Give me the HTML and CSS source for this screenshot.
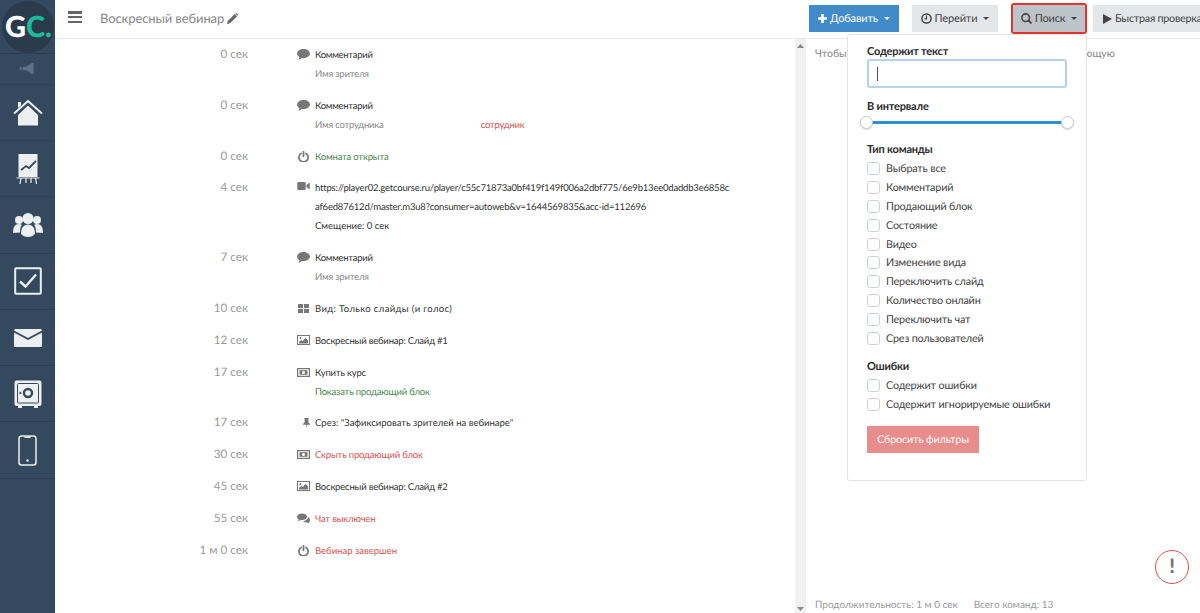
FILE: index.html
```html
<!DOCTYPE html>
<html lang="ru">
<head>
<meta charset="utf-8">
<title>Воскресный вебинар</title>
<link rel="stylesheet" href="styles.css">
</head>
<body>
<svg class="defs" width="0" height="0" aria-hidden="true">
  <symbol id="i-comment" viewBox="0 0 14 12"><path d="M7 0C3.100 0 0 2.200 0 5c0 1.600 1 3 2.600 3.900C2.400 10 1.800 10.900 1.200 11.600c1.500-.1 3-.8 4-1.700.6.100 1.200.1 1.800.1 3.900 0 7-2.200 7-5S10.900 0 7 0z"/></symbol>
  <symbol id="i-power" viewBox="0 0 12 12"><path d="M3.300 2.700a5 5 0 1 0 5.400 0M6 .8v5" fill="none" stroke="currentColor" stroke-width="1.900" stroke-linecap="round"/></symbol>
  <symbol id="i-video" viewBox="0 0 14 9"><rect x="0" y="0" width="9.500" height="9" rx="1.500"/><path d="M10.200 3.500 14 .5v8l-3.800-3z"/></symbol>
  <symbol id="i-grid" viewBox="0 0 11 9"><rect width="5" height="4"/><rect x="6" width="5" height="4"/><rect y="5" width="5" height="4"/><rect x="6" y="5" width="5" height="4"/></symbol>
  <symbol id="i-image" viewBox="0 0 13 10"><rect x=".5" y=".5" width="12" height="9" fill="none" stroke="currentColor"/><path d="M2 8.500V7L4.300 5l1.500 1L8.500 2.800 11 5.500v3z"/><circle cx="3.500" cy="3" r="1"/></symbol>
  <symbol id="i-money" viewBox="0 0 13 9"><path d="M.6.600h11.800v7.800H.6z" fill="none" stroke="currentColor" stroke-width="1.200"/><rect x="2.500" y="2.200" width="8" height="4.600"/><circle cx="6.500" cy="4.500" r="1.500" fill="#fff"/></symbol>
  <symbol id="i-pin" viewBox="0 0 7 10"><path d="M1.200 0h4.600v.8h-.4v3.400L7 6v.8H4L3.500 10 3 6.800H0V6l1.600-1.800V.8h-.4z"/></symbol>
  <symbol id="i-comments" viewBox="0 0 14 11"><path d="M5.500 0C2.500 0 0 1.600 0 3.700c0 1.100.7 2.100 1.900 2.800-.2.700-.6 1.200-1 1.600 1.200-.1 2.200-.5 3-1.100.5.100 1 .2 1.600.2 3 0 5.400-1.600 5.400-3.500S8.500 0 5.500 0z"/><path d="M12 3.800c0 2.500-2.500 4.200-5.500 4.400.8 1 2.300 1.600 3.900 1.600.3 0 .6 0 .9-.1.600.5 1.400.9 2.300 1-.3-.4-.6-.8-.7-1.300C14 9 14 8 14 7c0-1.300-.8-2.400-2-3.200z"/></symbol>
  <symbol id="i-caret" viewBox="0 0 8 4"><path d="M0 0h8L4 4z"/></symbol>
</svg>

<div class="app">
  <nav class="sidebar">
    <div class="logo-cell"><span class="logo"><span>G</span><span class="logo-c">C.</span></span></div>
    <div class="side-sound">
      <svg width="18" height="11" viewBox="0 0 18 12"><rect x="0" y="4" width="2" height="4" rx="1"/><path d="M3 4h4l6-4h2v12h-2L7 8H3z"/></svg>
    </div>
    <div class="side-item">
      <svg width="30" height="27" viewBox="0 0 30 27"><path d="M5 16 15 6.500 25 16v10.500H5z"/><path d="M1 14.500 15 2l14 12.500" fill="none" stroke="currentColor" stroke-width="2"/><path d="M5 9V3h3v3.500z"/></svg>
    </div>
    <div class="side-item">
      <svg width="24" height="32" viewBox="0 0 24 32"><path d="M2.500 1h19v23h-19z"/><path d="M5 17l5-4 3 2 7-7" fill="none" stroke="#34495e" stroke-width="1.800"/><path d="M.500 25h23M5 25l-1 6M10 25v5M15 25v5M19.500 25l1 6" fill="none" stroke="currentColor" stroke-width="1.200"/></svg>
    </div>
    <div class="side-item">
      <svg width="30" height="24" viewBox="0 0 30 24"><circle cx="15" cy="5.500" r="5.500"/><circle cx="6" cy="7" r="4"/><circle cx="24" cy="7" r="4"/><path d="M0 20c0-6 2-9 6-9 1 0 2 .3 2.800.8C7.600 13.500 7 16 7 19.500zM30 20c0-6-2-9-6-9-1 0-2 .3-2.800.8 1.200 1.700 1.800 4.200 1.800 7.700z"/><path d="M8 21c0-6 2.500-9.500 7-9.500s7 3.500 7 9.500c-2 1.800-4.300 3-7 3s-5-1.200-7-3z"/></svg>
    </div>
    <div class="side-item">
      <svg width="28" height="28" viewBox="0 0 28 28"><rect x="1.200" y="1.200" width="25.600" height="25.600" rx="1" fill="none" stroke="currentColor" stroke-width="2"/><path d="M6 14.500l5.500 5L22 7.500" fill="none" stroke="currentColor" stroke-width="2.400"/></svg>
    </div>
    <div class="side-item">
      <svg width="28" height="18" viewBox="0 0 28 18"><path d="M0 1.500 1 0h26l1 1.500L14 9z"/><path d="M0 3.500 14 11 28 3.500V17a1 1 0 0 1-1 1H1a1 1 0 0 1-1-1z"/></svg>
    </div>
    <div class="side-item">
      <svg width="28" height="28" viewBox="0 0 28 28"><rect x=".5" y=".5" width="27" height="25.500" rx="2"/><rect x="3.500" y="3.500" width="21" height="19.500" rx="1" fill="none" stroke="#34495e" stroke-width="1"/><circle cx="14" cy="13" r="4" fill="none" stroke="#34495e" stroke-width="2.400"/><path d="M5.500 11.500 8 13l-2.500 1.500z" fill="#34495e"/><rect x="4" y="26" width="4" height="2"/><rect x="20" y="26" width="4" height="2"/></svg>
    </div>
    <div class="side-item">
      <svg width="19" height="31" viewBox="0 0 19 31"><rect x="1" y="1" width="17" height="29" rx="2.500" fill="none" stroke="currentColor" stroke-width="1.500"/><rect x="6.500" y="1.500" width="6" height="1.500"/><circle cx="9.500" cy="25.500" r="1.200"/></svg>
    </div>
  </nav>

  <div class="content">
    <header class="topbar">
      <div class="top-left">
        <button class="burger" aria-label="Меню"><span></span><span></span><span></span></button>
        <span class="page-title">Воскресный вебинар
          <svg class="pencil" width="11" height="11" viewBox="0 0 12 12"><path d="M0 12l.8-3.300L8.500 1l2.500 2.500-7.700 7.700zM9.300.3a1 1 0 0 1 1.400 0l1 1a1 1 0 0 1 0 1.400l-.2.200L9 .4z"/></svg>
        </span>
      </div>
      <div class="top-actions">
        <button class="btn btn-add">
          <svg width="9" height="9" viewBox="0 0 10 10"><path d="M3.500 0h3v3.500H10v3H6.500V10h-3V6.500H0v-3h3.500z"/></svg>
          Добавить <svg class="caret" width="6" height="3"><use href="#i-caret"/></svg>
        </button>
        <button class="btn btn-go">
          <svg width="11" height="11" viewBox="0 0 11 11"><circle cx="5.500" cy="5.500" r="4.600" fill="none" stroke="currentColor" stroke-width="1.500"/><path d="M5.500 2.500v3.300H3.500" fill="none" stroke="currentColor" stroke-width="1.200"/></svg>
          Перейти <svg class="caret" width="6" height="3"><use href="#i-caret"/></svg>
        </button>
        <button class="btn btn-search">
          <svg width="11" height="11" viewBox="0 0 11 11"><circle cx="4.700" cy="4.700" r="3.800" fill="none" stroke="currentColor" stroke-width="1.600"/><path d="M7.500 7.500 10.500 10.500" stroke="currentColor" stroke-width="1.800"/></svg>
          Поиск <svg class="caret" width="6" height="3"><use href="#i-caret"/></svg>
        </button>
        <button class="btn btn-check">
          <svg width="9" height="10" viewBox="0 0 9 10"><path d="M0 0l9 5-9 5z"/></svg>
          Быстрая проверка
        </button>
      </div>
    </header>

    <div class="workspace">
      <main class="timeline">
        <div class="row"><div class="time">0 сек</div><div class="ico-cell"><svg class="i-c"><use href="#i-comment"/></svg></div><div class="body"><div class="dark label">Комментарий</div><div class="muted">Имя зрителя</div></div></div>
        <div class="row"><div class="time">0 сек</div><div class="ico-cell"><svg class="i-c"><use href="#i-comment"/></svg></div><div class="body"><div class="dark label">Комментарий</div><div class="muted">Имя сотрудника<span class="staff">сотрудник</span></div></div></div>
        <div class="row"><div class="time">0 сек</div><div class="ico-cell"><svg class="i-p"><use href="#i-power"/></svg></div><div class="body"><div class="green">Комната открыта</div></div></div>
        <div class="row"><div class="time">4 сек</div><div class="ico-cell"><svg class="i-v"><use href="#i-video"/></svg></div><div class="body"><div class="dark">https://player02.getcourse.ru/player/c55c71873a0bf419f149f006a2dbf775/6e9b13ee0daddb3e6858c<br>af6ed87612d/master.m3u8?consumer=autoweb&amp;v=1644569835&amp;acc-id=112696</div><div class="dark loose">Смещение: 0 сек</div></div></div>
        <div class="row"><div class="time">7 сек</div><div class="ico-cell"><svg class="i-c"><use href="#i-comment"/></svg></div><div class="body"><div class="dark label">Комментарий</div><div class="muted">Имя зрителя</div></div></div>
        <div class="row"><div class="time">10 сек</div><div class="ico-cell"><svg class="i-g"><use href="#i-grid"/></svg></div><div class="body"><div class="dark wide">Вид: Только слайды (и голос)</div></div></div>
        <div class="row"><div class="time">12 сек</div><div class="ico-cell"><svg class="i-i"><use href="#i-image"/></svg></div><div class="body"><div class="dark">Воскресный вебинар: Слайд #1</div></div></div>
        <div class="row"><div class="time">17 сек</div><div class="ico-cell"><svg class="i-m"><use href="#i-money"/></svg></div><div class="body"><div class="dark">Купить курс</div><div class="green">Показать продающий блок</div></div></div>
        <div class="row"><div class="time">17 сек</div><div class="ico-cell"><svg class="i-pin"><use href="#i-pin"/></svg></div><div class="body"><div class="dark loose">Срез: "Зафиксировать зрителей на вебинаре"</div></div></div>
        <div class="row"><div class="time">30 сек</div><div class="ico-cell"><svg class="i-m"><use href="#i-money"/></svg></div><div class="body"><div class="red">Скрыть продающий блок</div></div></div>
        <div class="row"><div class="time">45 сек</div><div class="ico-cell"><svg class="i-i"><use href="#i-image"/></svg></div><div class="body"><div class="dark">Воскресный вебинар: Слайд #2</div></div></div>
        <div class="row"><div class="time">55 сек</div><div class="ico-cell"><svg class="i-c"><use href="#i-comments"/></svg></div><div class="body"><div class="red">Чат выключен</div></div></div>
        <div class="row"><div class="time">1 м 0 сек</div><div class="ico-cell"><svg class="i-p"><use href="#i-power"/></svg></div><div class="body"><div class="red loose">Вебинар завершен</div></div></div>
      </main>

      <div class="scrollbar">
        <svg width="7" height="4" viewBox="0 0 7 4"><path d="M0 4h7L3.500 0z"/></svg>
        <svg width="7" height="4" viewBox="0 0 7 4"><path d="M0 0h7L3.500 4z"/></svg>
      </div>

      <aside class="side-panel">
        <p class="hint"><span>Чтобы</span><span>ющую</span></p>
        <div class="totals"><span>Продолжительность: 1 м 0 сек</span><span>Всего команд: 13</span></div>
      </aside>
    </div>
  </div>

  <form class="search-menu">
    <label class="field-label">Содержит текст</label>
    <div class="text-input"><span class="cursor"></span></div>
    <div class="field-label range-label">В интервале</div>
    <div class="range"><span class="knob"></span><span class="track"></span><span class="knob"></span></div>
    <div class="field-label type-label">Тип команды</div>
    <ul class="checks">
      <li><span class="box"></span>Выбрать все</li>
      <li><span class="box"></span>Комментарий</li>
      <li><span class="box"></span>Продающий блок</li>
      <li><span class="box"></span>Состояние</li>
      <li><span class="box"></span>Видео</li>
      <li><span class="box"></span>Изменение вида</li>
      <li><span class="box"></span>Переключить слайд</li>
      <li><span class="box"></span>Количество онлайн</li>
      <li><span class="box"></span>Переключить чат</li>
      <li><span class="box"></span>Срез пользователей</li>
    </ul>
    <div class="field-label err-label">Ошибки</div>
    <ul class="checks">
      <li><span class="box"></span>Содержит ошибки</li>
      <li><span class="box"></span>Содержит игнорируемые ошибки</li>
    </ul>
    <button type="button" class="reset">Сбросить фильтры</button>
  </form>

  <div class="alert-badge">!</div>
</div>
</body>
</html>
```
FILE: styles.css
```css
* { box-sizing: border-box; }
html, body { margin: 0; height: 100%; overflow: hidden; }
body { font-family: Lato, "Open Sans", "Liberation Sans", sans-serif; color: #333; background: #fff; text-rendering: geometricPrecision; }
.defs { position: absolute; }
button { font-family: inherit; text-rendering: geometricPrecision; }

.app { display: flex; height: 613px; width: 1200px; overflow: hidden; position: relative; }

.sidebar { width: 55px; flex: none; background: #34495e; color: #ecf0f1; display: flex; flex-direction: column; }
.sidebar svg { fill: currentColor; }
.logo-cell { height: 54px; overflow: hidden; border-bottom: 1px solid #2c3e50; display: flex; align-items: center; justify-content: center; }
.logo { width: 52px; height: 52px; border-radius: 50%; background: #2a3b4d; color: #fff; padding-left: 2px; font-size: 29px; font-weight: 900; display: flex; align-items: center; justify-content: center; }
.logo-c { color: #1abc9c; }
.side-sound { height: 30.700px; display: flex; align-items: center; justify-content: center; color: #5a7086; border-bottom: 1px solid #2c3e50; }
.side-item { height: 56.300px; display: flex; align-items: center; justify-content: center; border-bottom: 1px solid #2c3e50; }

.content { flex: 1; min-width: 0; display: flex; flex-direction: column; }
.topbar { height: 39px; flex: none; display: flex; border-bottom: 1px solid #e7eaec; overflow: hidden; }
.top-left { width: 754px; flex: none; display: flex; align-items: flex-start; }
.burger { width: 14px; height: 12px; margin: 11px 0 0 13px; padding: 0; border: 0; background: none; display: flex; flex-direction: column; justify-content: space-between; }
.burger span { display: block; height: 2.500px; background: #666; }
.page-title { margin: 9px 0 0 18px; font-size: 13px; letter-spacing: -0.1px; line-height: 18px; color: #888; white-space: nowrap; }
.pencil { fill: #666; vertical-align: -1px; }

.top-actions { display: flex; flex: none; align-items: flex-start; padding-top: 5px; }
.btn { height: 27px; border: 0; padding: 0; font-size: 11px; letter-spacing: -0.15px; color: #444; background: #e4e7ea; display: flex; align-items: center; justify-content: center; gap: 3px; white-space: nowrap; flex: none; }
.btn svg { fill: currentColor; flex: none; }
.btn .caret { margin-left: 3px; }
.btn-add { width: 90px; background: #428bca; color: #fff; }
.btn-go { width: 86px; margin-left: 13px; }
.btn-search { width: 72px; margin-left: 15px; background: #bcc3c9; outline: 2.500px solid #e3342b; border-radius: 1px; }
.btn-check { width: 107px; margin-left: 8px; justify-content: flex-start; padding-left: 10px; font-size: 10.800px; letter-spacing: -0.25px; }

.workspace { flex: 1; display: flex; min-height: 0; }
.timeline { width: 740px; flex: none; padding-top: 6px; overflow: hidden; }
.row { display: flex; align-items: flex-start; margin-bottom: 12.800px; font-size: 9.500px; letter-spacing: -0.2px; line-height: 19px; }
.time { width: 193px; flex: none; text-align: right; font-size: 11.700px; letter-spacing: 0; color: #999; }
.ico-cell { width: 13px; height: 19px; margin-left: 49px; flex: none; display: flex; align-items: center; justify-content: center; fill: #777; color: #777; }
.i-c { width: 13px; height: 11px; }
.i-p { width: 11px; height: 11px; }
.i-v { width: 13px; height: 8px; margin-bottom: 3px; }
.i-g { width: 11px; height: 9px; }
.i-i { width: 13px; height: 10px; }
.i-m { width: 13px; height: 9px; }
.i-pin { width: 7px; height: 10px; margin-left: 5px; }
.body { margin: 0 0 -1px 5px; padding-top: 1px; white-space: nowrap; }
.dark { color: #333; }
.label { letter-spacing: -0.3px; }
.loose { letter-spacing: 0; }
.wide { letter-spacing: 0.36px; }
.muted { color: #888; }
.green { color: #4a8a4f; }
.red, .staff { color: #d9534f; }
.staff { margin-left: 97px; }

.scrollbar { width: 11px; flex: none; background: #f1f1f1; display: flex; flex-direction: column; justify-content: space-between; align-items: center; padding: 5px 0 2px; }
.scrollbar svg { fill: #888; }

.side-panel { flex: 1; min-width: 0; display: flex; flex-direction: column; justify-content: space-between; padding: 6px 0 0 9px; overflow: hidden; }
.hint { margin: 0; width: 300px; display: flex; justify-content: space-between; font-size: 10.500px; line-height: 18px; color: #888; white-space: nowrap; }
.totals { display: flex; gap: 16px; font-size: 10px; line-height: 16px; color: #999; }

.search-menu { position: absolute; left: 847px; top: 34px; width: 240px; height: 447px; background: #fff; border: 1px solid #e2e4e7; border-radius: 3px; padding: 9px 19px 0; }
.field-label { font-size: 11px; letter-spacing: -0.2px; font-weight: 700; line-height: 15px; color: #2a2a2a; display: block; }
.text-input { height: 29px; margin-top: 0; border: 2px solid #b5d3ec; border-radius: 3px; width: 200px; display: flex; align-items: center; padding-left: 8px; }
.cursor { width: 1px; height: 14px; background: #555; }
.range-label { margin-top: 11px; }
.range { display: flex; align-items: center; width: 214px; margin: 0 0 0 -7px; height: 16px; }
.track { flex: 1; height: 3px; background: #2d8fd5; margin: 0 -1px; }
.knob { width: 13px; height: 13px; border-radius: 50%; background: #fff; border: 1px solid #ccc; flex: none; box-shadow: 0 1px 1px rgba(0,0,0,.15); position: relative; z-index: 1; }
.type-label { margin-top: 12px; }
.checks { list-style: none; margin: 2px 0 0; padding: 0; }
.checks li { display: flex; align-items: center; height: 18.900px; font-size: 10.800px; letter-spacing: -0.18px; color: #444; white-space: nowrap; }
.box { width: 13px; height: 13px; border: 1px solid #ccd2d8; border-radius: 3px; background: #fff; margin-right: 6px; flex: none; }
.err-label { margin-top: 11px; }
.reset { display: block; margin-top: 12px; width: 112px; height: 27px; border: 0; background: #e88d8b; color: #fff; font-size: 10.800px; letter-spacing: -0.15px; padding: 0; }

.alert-badge { position: absolute; left: 1155px; top: 550px; width: 34px; height: 34px; border: 1.500px solid #d9534f; border-radius: 50%; background: #fff; color: #777; font-size: 20px; font-weight: 900; line-height: 31px; text-align: center; }
```
